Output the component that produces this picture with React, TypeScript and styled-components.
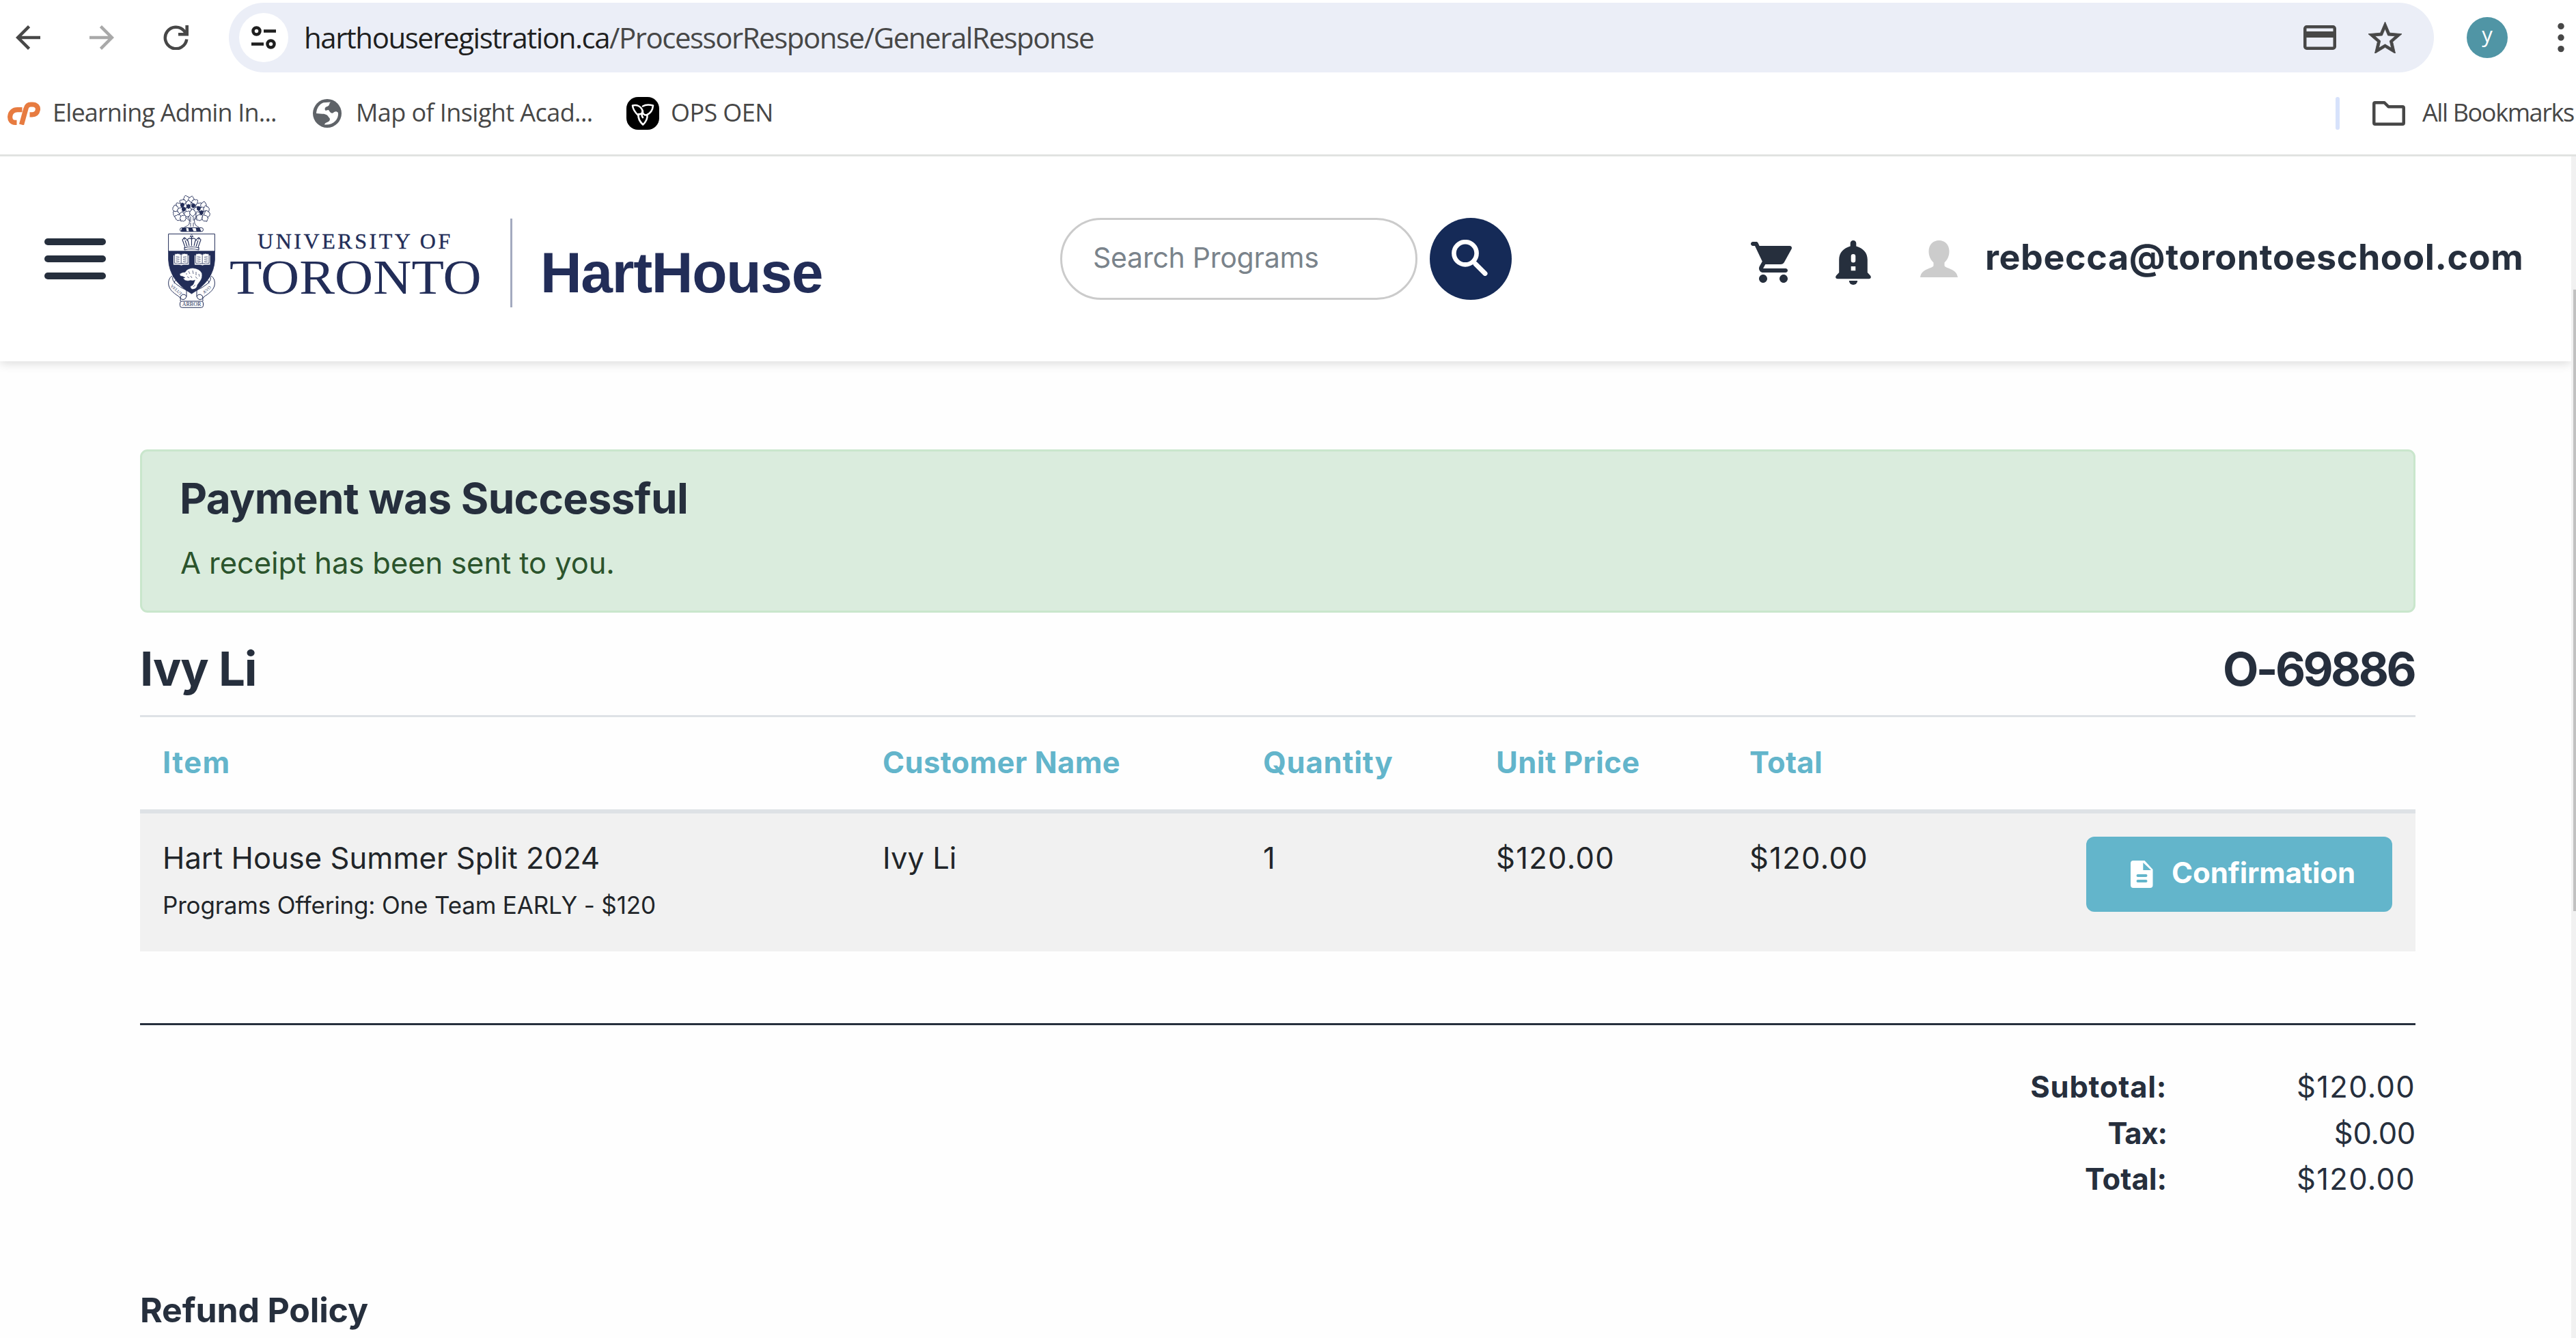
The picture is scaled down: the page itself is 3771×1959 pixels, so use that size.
import React from 'react';
import styled, { createGlobalStyle } from 'styled-components';

const sans = 'Inter, "Liberation Sans", sans-serif';
const chromeSans = '"Open Sans", "Noto Sans", sans-serif';
const navy = '#222d58';
const ink = '#262f3d';
const teal = '#63b5cb';

const Global = createGlobalStyle`
  * { box-sizing: border-box; }
  html, body { margin: 0; padding: 0; background: #fff; overflow: hidden; }
  svg { display: block; flex: none; }
`;

const Window = styled.div`
  width: 3771px;
  height: 1959px;
  overflow: hidden;
  background: #fefefe;
  font-family: ${sans};
  color: ${ink};
  white-space: nowrap;
`;

/* ---------- browser chrome ---------- */

const Chrome = styled.div`
  height: 229px;
  border-bottom: 3px solid #e1e3e1;
  background: #fff;
  font-family: ${chromeSans};
  overflow: hidden;
`;

const Toolbar = styled.div`
  display: flex;
  align-items: center;
  height: 102px;
  margin-top: 4px;
  padding-left: 23px;
`;

const NavButtons = styled.div`
  display: flex;
  align-items: center;
  gap: 72px;
  width: 312px;
  flex: none;
`;

const Omnibox = styled.div`
  display: flex;
  align-items: center;
  width: 3228px;
  height: 102px;
  flex: none;
  border-radius: 51px;
  background: #ebeef7;
  padding: 0 47px 0 15px;
`;

const SiteInfo = styled.div`
  display: flex;
  align-items: center;
  justify-content: center;
  width: 72px;
  height: 72px;
  flex: none;
  border-radius: 50%;
  background: #fff;
`;

const Url = styled.div`
  margin-left: 23px;
  padding-bottom: 2px;
  font-size: 42px;
  letter-spacing: -1.47px;
  color: #474747;
  span { color: #1f1f1f; }
`;

const OmniActions = styled.div`
  display: flex;
  align-items: center;
  gap: 47px;
  margin-left: auto;
`;

const Avatar = styled.div`
  width: 60px;
  height: 60px;
  flex: none;
  margin: 0 73px 0 48px;
  border-radius: 50%;
  background: #5095a5;
  color: #fff;
  font-size: 31px;
  line-height: 51px;
  text-align: center;
`;

const Bookmarks = styled.div`
  display: flex;
  align-items: center;
  height: 120px;
  padding-left: 11px;
  color: #474747;
`;

const Bookmark = styled.div<{ $width: number; $gap: number }>`
  display: flex;
  align-items: center;
  width: ${p => p.$width}px;
  gap: ${p => p.$gap}px;
  flex: none;
`;

const BookmarkText = styled.span<{ $ls: number }>`
  padding-bottom: 3px;
  font-size: 36px;
  letter-spacing: ${p => p.$ls}px;
`;

const AllBookmarks = styled.div`
  display: flex;
  align-items: center;
  width: 352px;
  flex: none;
  margin-left: auto;
`;

const Separator = styled.div`
  width: 6px;
  height: 48px;
  margin-right: 48px;
  flex: none;
  border-radius: 3px;
  background: #d7e2fb;
`;

/* ---------- page frame ---------- */

const Viewport = styled.div`
  display: flex;
  height: 1730px;
`;

const Page = styled.div`
  width: 3764px;
  height: 1730px;
  overflow: hidden;
`;

const ScrollTrack = styled.div`
  width: 7px;
  padding: 195px 0 0 3px;
  background: #f1f1f1;
`;

const ScrollThumb = styled.div`
  width: 4px;
  height: 910px;
  background: #c1c1c1;
`;

/* ---------- site header ---------- */

const Header = styled.header`
  display: flex;
  align-items: center;
  height: 300px;
  padding-left: 65px;
  background: #fff;
  box-shadow: 0 3px 14px rgba(0, 0, 0, 0.14);
`;

const Brand = styled.div`
  display: flex;
  align-items: flex-start;
  width: 1487px;
  height: 300px;
  flex: none;
`;

const Burger = styled.div`
  display: flex;
  flex-direction: column;
  gap: 15px;
  width: 90px;
  margin: 120px 91px 0 0;
`;

const BurgerBar = styled.div`
  height: 10px;
  border-radius: 5px;
  background: ${ink};
`;

const CrestBox = styled.div`
  width: 69px;
  margin: 57px 21px 0 0;
`;

const Wordmark = styled.div`
  width: 411px;
  padding-top: 101px;
  font-family: "Liberation Serif", "Times New Roman", serif;
  color: ${navy};
`;

const WordmarkTop = styled.div`
  height: 46px;
  padding-left: 41px;
  font-size: 32px;
  line-height: 46px;
  letter-spacing: 3.55px;
  -webkit-text-stroke: 0.4px ${navy};
`;

const WordmarkMain = styled.div`
  height: 60px;
  font-size: 71px;
  line-height: 60px;
  transform: scaleX(1.095);
  transform-origin: 0 50%;
`;

const BrandRule = styled.div`
  width: 3px;
  height: 130px;
  margin-top: 91px;
  background: #a4aabf;
`;

const HouseName = styled.div`
  margin: 120px 0 0 41px;
  font: bold 84px/100px "Liberation Sans", Arial, sans-serif;
  letter-spacing: -1.3px;
  color: ${navy};
`;

const SearchField = styled.div`
  width: 523px;
  height: 120px;
  flex: none;
  border: 3px solid #cbcbcb;
  border-radius: 60px;
  padding-left: 45px;
  font-size: 41px;
  line-height: 111px;
  letter-spacing: -0.25px;
  color: #7a838b;
`;

const SearchButton = styled.div`
  display: flex;
  align-items: center;
  justify-content: center;
  width: 120px;
  height: 120px;
  flex: none;
  margin: 0 350px 0 18px;
  padding: 0 3px 3px 0;
  border-radius: 50%;
  background: #152a57;
`;

const HeaderIcon = styled.div<{ $top?: number; $right: number }>`
  margin: ${p => p.$top ?? 0}px ${p => p.$right}px 0 0;
`;

const Email = styled.div`
  padding-bottom: 5px;
  font-size: 52px;
  font-weight: 700;
  letter-spacing: 0.6px;
`;

/* ---------- receipt ---------- */

const Content = styled.main`
  width: 3331px;
  margin: 129px 0 0 205px;
`;

const Alert = styled.section`
  height: 239px;
  padding: 29px 0 0 55px;
  border: 3px solid #c9e6cc;
  border-radius: 11px;
  background: #daecdd;
`;

const AlertTitle = styled.div`
  font-size: 62px;
  font-weight: 700;
  line-height: 80px;
  letter-spacing: -0.62px;
`;

const AlertText = styled.div`
  margin-top: 24px;
  padding-left: 1px;
  font-size: 43.5px;
  line-height: 60px;
  letter-spacing: -0.08px;
  color: #2b542c;
`;

const OrderHeading = styled.div`
  display: flex;
  justify-content: space-between;
  align-items: center;
  height: 150px;
  padding: 14px 2px 0 0;
  font-size: 69px;
  font-weight: 700;
  letter-spacing: -1.1px;
`;

const OrderNumber = styled.span`
  font-size: 68px;
  letter-spacing: -3.6px;
`;

const gridColumns = '1054px 557px 341px 371px 1008px';

const TableHead = styled.div`
  display: grid;
  grid-template-columns: ${gridColumns};
  align-items: center;
  height: 144px;
  padding: 0 0 4px;
  border-top: 3px solid #dee2e6;
  border-bottom: 6px solid #dee2e6;
  color: ${teal};
`;

const HeadCell = styled.div<{ $ls: number }>`
  padding-left: 33px;
  font-size: 43.5px;
  font-weight: 700;
  letter-spacing: ${p => p.$ls}px;
`;

const TableRow = styled.div`
  display: grid;
  grid-template-columns: ${gridColumns};
  height: 202px;
  background: #f1f1f1;
  color: #212529;
`;

const Cell = styled.div<{ $ls?: number }>`
  padding: 35px 0 0 33px;
  font-size: 43.5px;
  line-height: 60px;
  letter-spacing: ${p => p.$ls ?? 0.05}px;
`;

const LastCell = styled(Cell)`
  display: flex;
  justify-content: space-between;
  align-items: flex-start;
  padding-right: 34px;
`;

const Offering = styled.div`
  margin-top: 14px;
  font-size: 35px;
  line-height: 50px;
  letter-spacing: -0.17px;
`;

const ConfirmButton = styled.div`
  display: flex;
  align-items: center;
  gap: 27px;
  width: 448px;
  height: 110px;
  margin-top: -1px;
  padding-left: 65px;
  border-radius: 12px;
  background: ${teal};
  color: #fff;
  font-size: 42px;
  font-weight: 700;
  letter-spacing: -0.1px;
  span { padding-bottom: 4px; }
`;

const Totals = styled.div`
  display: grid;
  grid-template-columns: 2967px 364px;
  margin-top: 105px;
  padding-top: 57px;
  border-top: 3px solid ${ink};
  font-size: 43.5px;
  line-height: 67.6px;
  text-align: right;
`;

const TotalLabel = styled.div<{ $ls: number }>`
  font-weight: 700;
  letter-spacing: ${p => p.$ls}px;
`;

const TotalValue = styled.div<{ $ls: number }>`
  letter-spacing: ${p => p.$ls}px;
`;

const PolicyTitle = styled.div`
  margin-top: 127px;
  font-size: 50px;
  font-weight: 700;
  line-height: 60px;
  letter-spacing: -0.15px;
`;

/* ---------- icons ---------- */

const arrow = 'M20 11H7.83l5.59-5.59L12 4l-8 8 8 8 1.41-1.41L7.83 13H20v-2z';

const BackIcon = () => (
  <svg width="36" height="36" viewBox="4 4 16 16" fill="#474747"><path d={arrow} /></svg>
);

const ForwardIcon = () => (
  <svg width="36" height="36" viewBox="4 4 16 16" fill="#a9a9a9">
    <path d={arrow} transform="matrix(-1 0 0 1 24 0)" />
  </svg>
);

const ReloadIcon = () => (
  <svg width="37" height="36" viewBox="0 0 37 36" fill="none">
    <path d="M34.3 20.5A15.8 15.8 0 1 1 31 8.6l2.5 4" stroke="#474747" strokeWidth="4.5" />
    <path d="M32.4 0H37v15.5H22V11h7l3.4-2z" fill="#474747" />
  </svg>
);

const TuneIcon = () => (
  <svg width="36" height="34" viewBox="0 0 36 34" fill="none" stroke="#1f1f1f" strokeWidth="4.5">
    <circle cx="7.5" cy="7.5" r="5" />
    <path d="M18 7.5h18M0 26.5h18" />
    <circle cx="28.5" cy="26.5" r="5" />
  </svg>
);

const CardIcon = () => (
  <svg width="48" height="36" viewBox="0 0 48 36">
    <rect x="2.25" y="2.25" width="43.5" height="31.5" rx="2.5" fill="none" stroke="#474747" strokeWidth="4.5" />
    <rect x="2" y="9" width="44" height="9" fill="#474747" />
  </svg>
);

const StarIcon = () => (
  <svg width="49" height="46.5" viewBox="2 2 20 19" fill="#474747" stroke="#474747" strokeWidth=".35">
    <path d="M22 9.24l-7.19-.62L12 2 9.19 8.63 2 9.24l5.46 4.73L5.82 21 12 17.27 18.18 21l-1.63-7.03L22 9.24zM12 15.4l-3.76 2.27 1-4.28-3.32-2.88 4.38-.38L12 6.1l1.71 4.04 4.38.38-3.32 2.88 1 4.28L12 15.4z" />
  </svg>
);

const DotsIcon = () => (
  <svg width="10" height="44" viewBox="0 0 10 44" fill="#474747">
    <circle cx="5" cy="5.4" r="4.7" /><circle cx="5" cy="22" r="4.7" /><circle cx="5" cy="38.6" r="4.7" />
  </svg>
);

const CpIcon = () => (
  <svg width="48" height="34" viewBox="0 0 48 34" fill="none" stroke="#e77b40" strokeWidth="7.2" strokeLinejoin="round">
    <path d="M21.5 11.7H14.5C8.5 11.7 4.3 15 3.7 21.5 3.3 27 6.3 30.3 11 30.3H13.5" />
    <path d="M20.5 33.5L27 10C28 6 30 4 34 4H36.5C42 4 45 7.5 44.3 12 43.5 16.5 40.5 18.8 36 18.8H32.5" />
  </svg>
);

const GlobeIcon = () => (
  <svg width="42" height="42" viewBox="0 0 42 42">
    <circle cx="21" cy="21" r="21" fill="#5f6368" />
    <path fill="#fff" d="M5 21C5.5 13 9.5 7.5 15.5 5.2L26 4.5C23.5 6 25 9 22 10.5c-4 1-5 3-4 6 2 1 2.5-1 5-.5 2 3 4 6 7 4 2-1.5 4-3 7 0C38 30 30 38.5 17 37.5c1-3 3-3 5-4 3-1 4-5 1.5-6.5C22 24 19 21.5 14 21.7z" />
  </svg>
);

const TrilliumIcon = () => (
  <svg width="48" height="48" viewBox="0 0 48 48">
    <rect width="48" height="48" rx="17" fill="#000" />
    <g fill="none" stroke="#fff" strokeWidth="2.6" strokeLinejoin="round" strokeLinecap="round">
      <path d="M17.5 27C12.5 22.5 9.5 18 9 12.5c6.500-1.500 12.500 1 15 8.500-1 3.500-3 4.500-6 4" />
      <path d="M24 13.5c4-2.500 9.500-2.500 15-1-.5 6-4 11.500-9.500 14-4 0-5.500-1.500-6-5.500" />
      <path d="M17.500 26c-.5 6 2.500 10.500 6.700 14.500C29 36 31 31 30.500 26M23.500 22c-1.500 3.500-1.500 5.500.5 8" />
    </g>
  </svg>
);

const FolderIcon = () => (
  <svg width="48" height="36" viewBox="0 0 48 36" fill="none" stroke="#474747" strokeWidth="4.5" strokeLinejoin="round">
    <path d="M4 2.25h13.5l6 6H44q1.75 0 1.75 1.75v22q0 1.75-1.75 1.75H4q-1.75 0-1.75-1.75V4Q2.25 2.25 4 2.25z" />
  </svg>
);

const SearchIcon = () => (
  <svg width="53" height="53" viewBox="0 0 53 53" fill="none" stroke="#fff">
    <circle cx="20" cy="19.8" r="16.6" strokeWidth="6.6" />
    <path d="M35 35.5L49 49.5" strokeWidth="7" strokeLinecap="round" />
    <path d="M32 32l4 4" strokeWidth="5" />
  </svg>
);

const CartIcon = () => (
  <svg width="60" height="60" viewBox="1 2 20 20" fill={ink}>
    <path d="M7 18c-1.1 0-1.99.9-1.99 2S5.9 22 7 22s2-.9 2-2-.9-2-2-2zM1 3c0 .55.45 1 1 1h1l3.6 7.59-1.35 2.44C4.52 15.37 5.48 17 7 17h11c.55 0 1-.45 1-1s-.45-1-1-1H7l1.1-2h7.45c.75 0 1.41-.41 1.75-1.03l3.58-6.49c.37-.66-.11-1.48-.87-1.48H5.21l-.67-1.43c-.16-.35-.52-.57-.9-.57H2c-.55 0-1 .45-1 1zm16 15c-1.1 0-1.99.9-1.99 2s.89 2 1.99 2 2-.9 2-2-.9-2-2-2z" />
  </svg>
);

const BellIcon = () => (
  <svg width="52" height="65" viewBox="0 0 52 65" fill={ink} fillRule="evenodd">
    <path d="M26 0c2.500 0 4.300 1.800 4.300 4.300V8.500C40 11 46.800 18 46.800 28v19l4 4.300c2 2.200 1 4.900-2 4.900H3.200c-3 0-4-2.700-2-4.900l4-4.300V28C5.200 18 12 11 21.700 8.500V4.300C21.700 1.800 23.500 0 26 0zM22.700 23.300v6a3.300 3.300 0 0 0 6.600 0v-6a3.300 3.300 0 0 0-6.600 0zM22.700 38v6.300h6.600V38z" />
    <path d="M19.800 59h12.400a6.200 6 0 0 1-12.400 0z" />
  </svg>
);

const PersonIcon = () => (
  <svg width="55" height="54" viewBox="0 0 55 54" fill="#cccccc">
    <path d="M27.5 0C36.5 0 42.5 6.500 42.500 16c0 7-2.500 12-7 16.500V37c1.500 4.500 17.500 3.500 19.500 17H0C2 40.500 18 41.500 19.500 37v-4.500c-4.500-4.500-7-9.500-7-16.500C12.500 6.500 18.500 0 27.500 0z" />
  </svg>
);

const FileIcon = () => (
  <svg width="33" height="40" viewBox="0 0 33 40" fill="#fff" fillRule="evenodd">
    <path d="M4 0h16.5L32.5 13v23a4 4 0 0 1-4 4H4a4 4 0 0 1-4-4V4a4 4 0 0 1 4-4zM18.3 3v11H30zM10.5 20a1.900 1.900 0 0 0 0 4h12a1.900 1.900 0 0 0 0-4zM10.5 28a1.900 1.900 0 0 0 0 4h12a1.900 1.900 0 0 0 0-4z" />
  </svg>
);

/* Leaves of the oak: centre x, centre y, rotation */
const leaves: [number, number, number][] = [
  [27, 5, -20], [34, 6, 15], [22, 10, -60], [39, 10, 50], [30, 12, 0], [16, 15, -40], [24, 17, 20],
  [36, 16, -15], [45, 15, 40], [52, 14, 10], [11, 19, -10], [18, 22, 30], [30, 21, -30], [42, 21, 20],
  [50, 21, 60], [56, 20, -20], [12, 27, -50], [20, 29, 10], [28, 27, 40], [36, 25, 0], [45, 28, -40],
  [53, 27, 30], [57, 27, -10], [15, 32, -70], [22, 33, 40], [46, 32, 50], [54, 33, -30],
];

/* Dark gaps between the leaves: centre x, centre y */
const shadows: [number, number][] = [[30, 16], [37, 15], [23, 20], [45, 19], [49, 25], [21, 14]];

const scroll =
  'M6 118C1 121 0 127 1 132C3 140 10 144 17 149q2 2 1 6M8 117Q4 124 12 130Q18 135 27 139V148M8 117l4 6q-3 3-3 6M27 148q-1-3-5-3-4 1-4 5 1 3 5 2.5 3-.5 4-4.5';

const Book = ({ x }: { x: number }) => (
  <g transform={`translate(${x} 85)`}>
    <path d="M0 2.5h2V1q5-2 9.5.5Q16-1 21.5 1v1.5h2V17h-9l-2.5 1-3-1H0z" fill="#fff" />
    <path d="M11.7 1.5V15M2 2.5V14.5q5-1.2 9.7.7 4.5-2 9.8-.7V2.5M4 5l5 .5M4 8l5 .5M4 11l5 .5M14.5 5.5l5-.5M14.5 8.5l5-.5M14.5 11.5l5-.5" fill="none" stroke={navy} strokeWidth=".8" />
  </g>
);

const Crest = () => (
  <svg width="69" height="165" viewBox="0 0 69 165" fill="none" stroke={navy} strokeWidth=".85" fontFamily="Liberation Serif, serif">
    {leaves.map(([x, y, r], i) => (
      <path
        key={i}
        transform={`translate(${x} ${y + 0.5}) rotate(${r})`}
        fill="#fff"
        d="M0-5.5q2 .5 2 2.2 2.3.3 1.8 2.3 1.5 1.3 0 2.5.3 2-1.8 2L0 5.5-2 3.5q-2.2 0-1.800-2-1.500-1.200 0-2.500-.5-2 1.800-2.300 0-1.700 2-2.200z"
      />
    ))}
    {shadows.map(([x, y], i) => (
      <path key={i} transform={`translate(${x} ${y})`} fill={navy} d="M-2.500-1.500L0-3l2.500 1.500L2 2l-2 1.500L-2.500 2z" />
    ))}
    <path d="M29 30q4 6 2 12-2 3-7 4.5M41 30q-4 6-2 11 1 4 6 5.5M33 31v8M37 31v6M27 33l4 4M42 32l-3 4M33 40v6M37 40v6" />
    <rect x="17.5" y="47.5" width="34" height="5.5" rx="2.7" strokeWidth="1" />
    <path d="M19 52.5l2-4.5h5l1 4.5zM31 52.5l-1-4.5h5l2 4.5zM42 52.5l-1-4.5h5l2 4.5z" fill={navy} />

    <path d={scroll} strokeWidth="1" />
    <path d={scroll} strokeWidth="1" transform="matrix(-1 0 0 1 69 0)" />
    <rect x="17.5" y="155" width="34" height="9.3" rx="3" fill="#fff" strokeWidth="1" />
    <g fill={navy} stroke="none" textAnchor="middle">
      <text fontSize="8" x="34.5" y="162.4">ARBOR</text>
      <text fontSize="6.2" transform="translate(10.8 140) rotate(42)">VELUT</text>
      <text fontSize="6.2" transform="translate(58 140) rotate(-42)">ÆVO</text>
    </g>

    <path d="M.6 56.6H68.4V82H.6z" fill="#fff" strokeWidth="1" />
    <path d="M.6 82H68.4V94Q67 125 34.5 144 2 125 .6 94z" fill={navy} />
    <path d="M24 80q10-3 21 0M24 77q10-3 21 0M25 76L21 65q4-5 7 1 2-5 6.5-2 4.500-3 6.500 2 3-6 7-1l-4 11M28 75l-3-9M34.500 74V60M32 60.500h5M41 75l3-9M31 74l-2-8M38 74l2-8M24 80v-4M45 80v-4" strokeWidth="1.1" />
    <circle cx="24" cy="63" r="1.3" /><circle cx="45" cy="63" r="1.3" /><circle cx="34.5" cy="59.5" r="1.6" />
    <Book x={7.5} />
    <Book x={38.5} />
    <path d="M17 115l4-2 4-.5Q28 107 36 106.5 46 107 49.5 114 51 121 46 127L43 131Q42 138 35 137.5 32 135 33 133 37 132 38 128L39.5 124Q36 125.5 33 124.5 29 126 25 124.5L22 121.5 25 120.5 21 118.5 18 118z" fill="#fff" strokeWidth=".4" />
    <path d="M30 111l2 4M36 110l1 5M41 112v5M26 115h2M33 118l2 3M40 119l3 3M37 134l3-3M28 119l3 2M45 115l1 4" strokeWidth=".7" />
  </svg>
);

/* ---------- app ---------- */

const columns: [string, number][] = [
  ['Item', 1.4], ['Customer Name', 0.35], ['Quantity', 0.8], ['Unit Price', 0.4], ['Total', 0.3],
];

const totals: [string, number, string, number][] = [
  ['Subtotal:', 0.75, '$120.00', 1.3],
  ['Tax:', -1.1, '$0.00', -0.28],
  ['Total:', 0, '$120.00', 1.3],
];

export default function App() {
  return (
    <Window>
      <Global />
      <Chrome>
        <Toolbar>
          <NavButtons><BackIcon /><ForwardIcon /><ReloadIcon /></NavButtons>
          <Omnibox>
            <SiteInfo><TuneIcon /></SiteInfo>
            <Url><span>harthouseregistration.ca</span>/ProcessorResponse/GeneralResponse</Url>
            <OmniActions><CardIcon /><StarIcon /></OmniActions>
          </Omnibox>
          <Avatar>y</Avatar>
          <DotsIcon />
        </Toolbar>
        <Bookmarks>
          <Bookmark $width={447} $gap={18}><CpIcon /><BookmarkText $ls={-0.84}>Elearning Admin In...</BookmarkText></Bookmark>
          <Bookmark $width={459} $gap={21}><GlobeIcon /><BookmarkText $ls={-0.58}>Map of Insight Acad...</BookmarkText></Bookmark>
          <Bookmark $width={300} $gap={17}><TrilliumIcon /><BookmarkText $ls={-0.6}>OPS OEN</BookmarkText></Bookmark>
          <AllBookmarks>
            <Separator />
            <Bookmark $width={298} $gap={25}><FolderIcon /><BookmarkText $ls={-1.39}>All Bookmarks</BookmarkText></Bookmark>
          </AllBookmarks>
        </Bookmarks>
      </Chrome>

      <Viewport>
        <Page>
          <Header>
            <Brand>
              <Burger><BurgerBar /><BurgerBar /><BurgerBar /></Burger>
              <CrestBox><Crest /></CrestBox>
              <Wordmark>
                <WordmarkTop>UNIVERSITY OF</WordmarkTop>
                <WordmarkMain>TORONTO</WordmarkMain>
              </Wordmark>
              <BrandRule />
              <HouseName>HartHouse</HouseName>
            </Brand>
            <SearchField>Search Programs</SearchField>
            <SearchButton><SearchIcon /></SearchButton>
            <HeaderIcon $top={10} $right={64}><CartIcon /></HeaderIcon>
            <HeaderIcon $top={11} $right={72}><BellIcon /></HeaderIcon>
            <HeaderIcon $right={40}><PersonIcon /></HeaderIcon>
            <Email>rebecca@torontoeschool.com</Email>
          </Header>

          <Content>
            <Alert>
              <AlertTitle>Payment was Successful</AlertTitle>
              <AlertText>A receipt has been sent to you.</AlertText>
            </Alert>

            <OrderHeading>
              <span>Ivy Li</span>
              <OrderNumber>O-69886</OrderNumber>
            </OrderHeading>

            <TableHead>
              {columns.map(([label, ls]) => <HeadCell key={label} $ls={ls}>{label}</HeadCell>)}
            </TableHead>
            <TableRow>
              <Cell>
                Hart House Summer Split 2024
                <Offering>Programs Offering: One Team EARLY - $120</Offering>
              </Cell>
              <Cell>Ivy Li</Cell>
              <Cell>1</Cell>
              <Cell $ls={1.3}>$120.00</Cell>
              <LastCell $ls={1.3}>
                $120.00
                <ConfirmButton><FileIcon /><span>Confirmation</span></ConfirmButton>
              </LastCell>
            </TableRow>

            <Totals>
              {totals.map(([label, labelLs, value, valueLs]) => (
                <React.Fragment key={label}>
                  <TotalLabel $ls={labelLs}>{label}</TotalLabel>
                  <TotalValue $ls={valueLs}>{value}</TotalValue>
                </React.Fragment>
              ))}
            </Totals>

            <PolicyTitle>Refund Policy</PolicyTitle>
          </Content>
        </Page>
        <ScrollTrack><ScrollThumb /></ScrollTrack>
      </Viewport>
    </Window>
  );
}
